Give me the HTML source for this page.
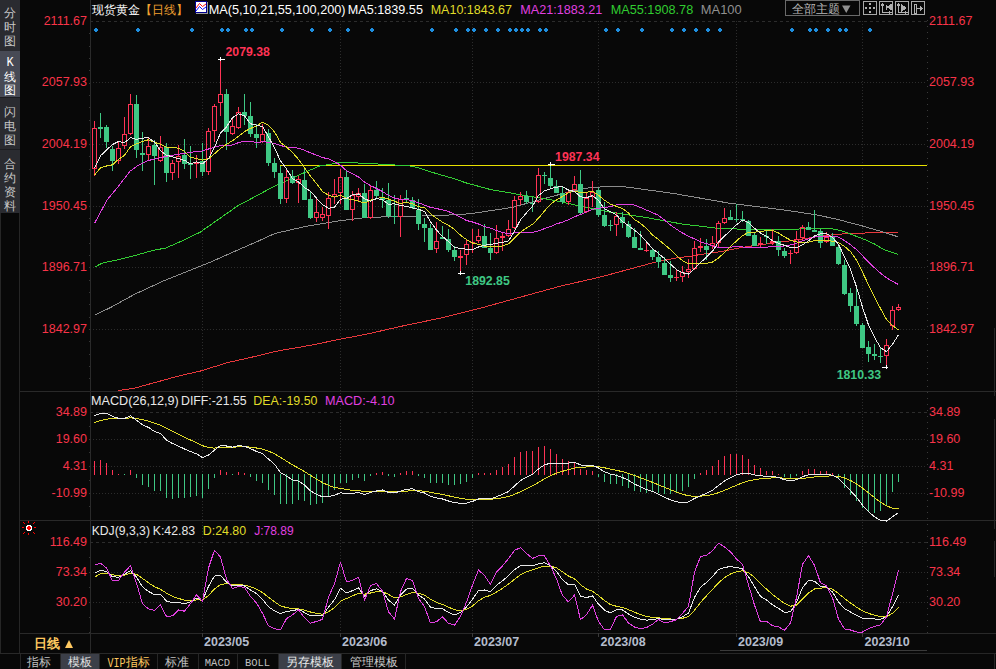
<!DOCTYPE html>
<html><head><meta charset="utf-8"><title>现货黄金 日线</title>
<style>html,body{margin:0;padding:0;background:#080808;width:996px;height:669px;overflow:hidden;font-family:"Liberation Sans",sans-serif}
svg{display:block}
polyline{shape-rendering:crispEdges} circle{shape-rendering:geometricPrecision}
text{shape-rendering:geometricPrecision}
</style></head><body>
<svg width="996" height="669" viewBox="0 0 996 669" shape-rendering="crispEdges"><rect x="0" y="0" width="996" height="669" fill="#080808"/>
<rect x="0" y="0" width="20" height="213" fill="#2a2b30"/>
<rect x="0" y="51" width="20" height="46" fill="#474a55"/>
<rect x="0" y="97" width="20" height="1" fill="#1c1d21"/>
<rect x="0" y="149" width="20" height="1" fill="#1c1d21"/>
<rect x="0" y="213" width="1" height="440" fill="#262626"/>
<rect x="19" y="213" width="1" height="440" fill="#262626"/>
<text x="9.8" y="16.5" fill="#c8c8c8" font-size="12" text-anchor="middle" font-family='"Liberation Sans", sans-serif'>分</text>
<text x="9.8" y="30.5" fill="#c8c8c8" font-size="12" text-anchor="middle" font-family='"Liberation Sans", sans-serif'>时</text>
<text x="9.8" y="45.0" fill="#c8c8c8" font-size="12" text-anchor="middle" font-family='"Liberation Sans", sans-serif'>图</text>
<text x="10" y="66" fill="#ffffff" font-size="12" text-anchor="middle" font-family='"Liberation Mono", monospace'>K</text>
<text x="9.8" y="80.5" fill="#ffffff" font-size="12" text-anchor="middle" font-family='"Liberation Sans", sans-serif'>线</text>
<text x="9.8" y="94.0" fill="#ffffff" font-size="12" text-anchor="middle" font-family='"Liberation Sans", sans-serif'>图</text>
<text x="9.8" y="115.5" fill="#c8c8c8" font-size="12" text-anchor="middle" font-family='"Liberation Sans", sans-serif'>闪</text>
<text x="9.8" y="129.5" fill="#c8c8c8" font-size="12" text-anchor="middle" font-family='"Liberation Sans", sans-serif'>电</text>
<text x="9.8" y="144.0" fill="#c8c8c8" font-size="12" text-anchor="middle" font-family='"Liberation Sans", sans-serif'>图</text>
<text x="9.8" y="168.0" fill="#c8c8c8" font-size="12" text-anchor="middle" font-family='"Liberation Sans", sans-serif'>合</text>
<text x="9.8" y="182.0" fill="#c8c8c8" font-size="12" text-anchor="middle" font-family='"Liberation Sans", sans-serif'>约</text>
<text x="9.8" y="196.0" fill="#c8c8c8" font-size="12" text-anchor="middle" font-family='"Liberation Sans", sans-serif'>资</text>
<text x="9.8" y="210.0" fill="#c8c8c8" font-size="12" text-anchor="middle" font-family='"Liberation Sans", sans-serif'>料</text>
<rect x="20" y="391" width="976" height="1" fill="#292929"/>
<rect x="20" y="520" width="976" height="1" fill="#292929"/>
<rect x="20" y="633" width="976" height="1" fill="#292929"/>
<rect x="90" y="0" width="1" height="653" fill="#2a2a2a"/>
<line x1="927.5" y1="20" x2="927.5" y2="633" stroke="#3a3a3a" stroke-width="1" stroke-dasharray="1,5"/>
<rect x="89" y="33" width="1" height="1" fill="#353535"/>
<rect x="89" y="46" width="1" height="1" fill="#353535"/>
<rect x="89" y="58" width="1" height="1" fill="#353535"/>
<rect x="89" y="70" width="1" height="1" fill="#353535"/>
<rect x="89" y="83" width="1" height="1" fill="#353535"/>
<rect x="89" y="95" width="1" height="1" fill="#353535"/>
<rect x="89" y="107" width="1" height="1" fill="#353535"/>
<rect x="89" y="120" width="1" height="1" fill="#353535"/>
<rect x="89" y="132" width="1" height="1" fill="#353535"/>
<rect x="89" y="144" width="1" height="1" fill="#353535"/>
<rect x="89" y="156" width="1" height="1" fill="#353535"/>
<rect x="89" y="169" width="1" height="1" fill="#353535"/>
<rect x="89" y="181" width="1" height="1" fill="#353535"/>
<rect x="89" y="193" width="1" height="1" fill="#353535"/>
<rect x="89" y="206" width="1" height="1" fill="#353535"/>
<rect x="89" y="218" width="1" height="1" fill="#353535"/>
<rect x="89" y="230" width="1" height="1" fill="#353535"/>
<rect x="89" y="243" width="1" height="1" fill="#353535"/>
<rect x="89" y="255" width="1" height="1" fill="#353535"/>
<rect x="89" y="267" width="1" height="1" fill="#353535"/>
<rect x="89" y="280" width="1" height="1" fill="#353535"/>
<rect x="89" y="292" width="1" height="1" fill="#353535"/>
<rect x="89" y="304" width="1" height="1" fill="#353535"/>
<rect x="89" y="317" width="1" height="1" fill="#353535"/>
<rect x="89" y="329" width="1" height="1" fill="#353535"/>
<rect x="89" y="341" width="1" height="1" fill="#353535"/>
<rect x="89" y="354" width="1" height="1" fill="#353535"/>
<rect x="89" y="366" width="1" height="1" fill="#353535"/>
<rect x="89" y="378" width="1" height="1" fill="#353535"/>
<rect x="89" y="426" width="1" height="1" fill="#353535"/>
<rect x="89" y="439" width="1" height="1" fill="#353535"/>
<rect x="89" y="452" width="1" height="1" fill="#353535"/>
<rect x="89" y="466" width="1" height="1" fill="#353535"/>
<rect x="89" y="480" width="1" height="1" fill="#353535"/>
<rect x="89" y="493" width="1" height="1" fill="#353535"/>
<rect x="89" y="506" width="1" height="1" fill="#353535"/>
<rect x="89" y="557" width="1" height="1" fill="#353535"/>
<rect x="89" y="572" width="1" height="1" fill="#353535"/>
<rect x="89" y="587" width="1" height="1" fill="#353535"/>
<rect x="89" y="602" width="1" height="1" fill="#353535"/>
<rect x="89" y="617" width="1" height="1" fill="#353535"/>
<rect x="89" y="632" width="1" height="1" fill="#353535"/>
<line x1="90" y1="21.5" x2="927" y2="21.5" stroke="#2c2c2c" stroke-width="1" stroke-dasharray="3,3"/>
<text x="87" y="24.6" fill="#f83448" font-size="12.5" text-anchor="end" font-family='"Liberation Sans", sans-serif'>2111.67</text>
<text x="929" y="24.6" fill="#f83448" font-size="12.5" font-family='"Liberation Sans", sans-serif'>2111.67</text>
<line x1="90" y1="82.5" x2="927" y2="82.5" stroke="#2c2c2c" stroke-width="1" stroke-dasharray="1,2"/>
<text x="87" y="86.1" fill="#f83448" font-size="12.5" text-anchor="end" font-family='"Liberation Sans", sans-serif'>2057.93</text>
<text x="929" y="86.1" fill="#f83448" font-size="12.5" font-family='"Liberation Sans", sans-serif'>2057.93</text>
<line x1="90" y1="144.5" x2="927" y2="144.5" stroke="#2c2c2c" stroke-width="1" stroke-dasharray="1,2"/>
<text x="87" y="147.6" fill="#f83448" font-size="12.5" text-anchor="end" font-family='"Liberation Sans", sans-serif'>2004.19</text>
<text x="929" y="147.6" fill="#f83448" font-size="12.5" font-family='"Liberation Sans", sans-serif'>2004.19</text>
<line x1="90" y1="206.5" x2="927" y2="206.5" stroke="#2c2c2c" stroke-width="1" stroke-dasharray="1,2"/>
<text x="87" y="209.6" fill="#f83448" font-size="12.5" text-anchor="end" font-family='"Liberation Sans", sans-serif'>1950.45</text>
<text x="929" y="209.6" fill="#f83448" font-size="12.5" font-family='"Liberation Sans", sans-serif'>1950.45</text>
<line x1="90" y1="267.5" x2="927" y2="267.5" stroke="#2c2c2c" stroke-width="1" stroke-dasharray="1,2"/>
<text x="87" y="270.6" fill="#f83448" font-size="12.5" text-anchor="end" font-family='"Liberation Sans", sans-serif'>1896.71</text>
<text x="929" y="270.6" fill="#f83448" font-size="12.5" font-family='"Liberation Sans", sans-serif'>1896.71</text>
<line x1="90" y1="329.5" x2="927" y2="329.5" stroke="#2c2c2c" stroke-width="1" stroke-dasharray="1,2"/>
<text x="87" y="332.6" fill="#f83448" font-size="12.5" text-anchor="end" font-family='"Liberation Sans", sans-serif'>1842.97</text>
<text x="929" y="332.6" fill="#f83448" font-size="12.5" font-family='"Liberation Sans", sans-serif'>1842.97</text>
<line x1="90" y1="412.5" x2="927" y2="412.5" stroke="#2c2c2c" stroke-width="1" stroke-dasharray="3,3"/>
<text x="87" y="415.6" fill="#f83448" font-size="12.5" text-anchor="end" font-family='"Liberation Sans", sans-serif'>34.89</text>
<text x="929" y="415.6" fill="#f83448" font-size="12.5" font-family='"Liberation Sans", sans-serif'>34.89</text>
<line x1="90" y1="439.5" x2="927" y2="439.5" stroke="#2c2c2c" stroke-width="1" stroke-dasharray="1,2"/>
<text x="87" y="442.6" fill="#f83448" font-size="12.5" text-anchor="end" font-family='"Liberation Sans", sans-serif'>19.60</text>
<text x="929" y="442.6" fill="#f83448" font-size="12.5" font-family='"Liberation Sans", sans-serif'>19.60</text>
<line x1="90" y1="466.5" x2="927" y2="466.5" stroke="#2c2c2c" stroke-width="1" stroke-dasharray="1,2"/>
<text x="87" y="469.6" fill="#f83448" font-size="12.5" text-anchor="end" font-family='"Liberation Sans", sans-serif'>4.31</text>
<text x="929" y="469.6" fill="#f83448" font-size="12.5" font-family='"Liberation Sans", sans-serif'>4.31</text>
<line x1="90" y1="493.5" x2="927" y2="493.5" stroke="#2c2c2c" stroke-width="1" stroke-dasharray="1,2"/>
<text x="87" y="496.6" fill="#f83448" font-size="12.5" text-anchor="end" font-family='"Liberation Sans", sans-serif'>-10.99</text>
<text x="929" y="496.6" fill="#f83448" font-size="12.5" font-family='"Liberation Sans", sans-serif'>-10.99</text>
<line x1="90" y1="542.5" x2="927" y2="542.5" stroke="#2c2c2c" stroke-width="1" stroke-dasharray="3,3"/>
<text x="87" y="545.6" fill="#f83448" font-size="12.5" text-anchor="end" font-family='"Liberation Sans", sans-serif'>116.49</text>
<text x="929" y="545.6" fill="#f83448" font-size="12.5" font-family='"Liberation Sans", sans-serif'>116.49</text>
<line x1="90" y1="572.5" x2="927" y2="572.5" stroke="#2c2c2c" stroke-width="1" stroke-dasharray="1,2"/>
<text x="87" y="575.6" fill="#f83448" font-size="12.5" text-anchor="end" font-family='"Liberation Sans", sans-serif'>73.34</text>
<text x="929" y="575.6" fill="#f83448" font-size="12.5" font-family='"Liberation Sans", sans-serif'>73.34</text>
<line x1="90" y1="602.5" x2="927" y2="602.5" stroke="#2c2c2c" stroke-width="1" stroke-dasharray="1,2"/>
<text x="87" y="605.6" fill="#f83448" font-size="12.5" text-anchor="end" font-family='"Liberation Sans", sans-serif'>30.20</text>
<text x="929" y="605.6" fill="#f83448" font-size="12.5" font-family='"Liberation Sans", sans-serif'>30.20</text>
<line x1="202.5" y1="21" x2="202.5" y2="633" stroke="#2c2c2c" stroke-width="1" stroke-dasharray="1,2"/>
<rect x="202" y="633" width="1" height="4" fill="#3a3a3a"/>
<line x1="340.5" y1="21" x2="340.5" y2="633" stroke="#2c2c2c" stroke-width="1" stroke-dasharray="1,2"/>
<rect x="340" y="633" width="1" height="4" fill="#3a3a3a"/>
<line x1="472.5" y1="21" x2="472.5" y2="633" stroke="#2c2c2c" stroke-width="1" stroke-dasharray="1,2"/>
<rect x="472" y="633" width="1" height="4" fill="#3a3a3a"/>
<line x1="598.5" y1="21" x2="598.5" y2="633" stroke="#2c2c2c" stroke-width="1" stroke-dasharray="1,2"/>
<rect x="598" y="633" width="1" height="4" fill="#3a3a3a"/>
<line x1="736.5" y1="21" x2="736.5" y2="633" stroke="#2c2c2c" stroke-width="1" stroke-dasharray="1,2"/>
<rect x="736" y="633" width="1" height="4" fill="#3a3a3a"/>
<line x1="862.5" y1="21" x2="862.5" y2="633" stroke="#2c2c2c" stroke-width="1" stroke-dasharray="1,2"/>
<rect x="862" y="633" width="1" height="4" fill="#3a3a3a"/>
<rect x="280" y="165" width="647" height="1" fill="#e8e000"/>
<polyline points="118.1,390.5 134.3,388.2 180.6,375.5 201.5,370.8 227.0,362.7 258.0,355.8 274.8,351.5 312.2,345.0 339.6,339.3 367.4,334.0 404.7,325.5 440.2,318.2 480.3,308.2 520.5,297.1 560.6,286.1 600.0,277.1 640.0,266.3 656.0,261.9 678.6,257.5 691.4,256.3 700.0,254.5 721.1,251.6 742.2,247.4 756.3,245.3 777.4,242.5 798.5,239.7 819.5,236.2 840.0,234.1 867.0,232.9 897.6,232.6" fill="none" stroke="#e8383c" stroke-width="1" stroke-linejoin="round"/>
<polyline points="94.5,315.3 111.2,307.2 134.3,294.4 164.4,280.5 187.6,271.3 210.7,262.0 231.6,252.7 258.0,241.2 274.8,233.5 304.7,226.6 338.0,221.0 367.4,217.3 404.7,216.5 442.1,215.4 470.0,213.8 512.2,207.4 540.3,199.7 568.5,192.0 589.5,187.7 610.0,186.3 624.7,186.8 672.5,193.3 728.7,203.1 785.0,210.1 816.2,214.8 838.0,219.5 862.5,226.0 883.2,232.0 897.7,236.7" fill="none" stroke="#8c8c8c" stroke-width="1" stroke-linejoin="round"/>
<polyline points="94.5,267.3 101.9,263.2 118.1,259.7 134.3,255.7 152.8,250.4 165.6,248.1 184.1,240.0 200.1,232.2 237.5,206.0 270.0,188.6 279.7,183.8 289.4,179.4 299.1,175.0 308.8,170.7 320.0,165.8 330.0,164.5 339.6,162.5 355.7,162.9 379.8,164.1 391.8,164.8 410.3,166.0 416.7,167.3 432.8,172.5 452.1,178.1 466.5,183.0 490.0,189.4 516.8,194.1 554.2,200.4 580.0,206.0 607.4,211.7 644.7,217.3 682.1,224.0 719.5,228.5 756.8,229.6 794.2,229.2 816.2,228.3 830.0,228.5 839.9,230.4 847.0,232.6 856.0,236.2 865.2,239.8 874.2,243.9 883.2,249.3 897.7,254.3" fill="none" stroke="#33cc33" stroke-width="1" stroke-linejoin="round"/>
<rect x="92.5" y="128.5" width="4" height="40" fill="none" stroke="#ff3355"/>
<rect x="94" y="121" width="1" height="7" fill="#ff3355"/>
<rect x="94" y="169" width="1" height="7" fill="#ff3355"/>
<rect x="98" y="127" width="5" height="2" fill="#3fc884"/>
<rect x="100" y="113" width="1" height="25" fill="#3fc884"/>
<rect x="104" y="127" width="5" height="15" fill="#3fc884"/>
<rect x="106" y="125" width="1" height="23" fill="#3fc884"/>
<rect x="110" y="149" width="5" height="12" fill="#3fc884"/>
<rect x="112" y="146" width="1" height="25" fill="#3fc884"/>
<rect x="116.5" y="148.5" width="4" height="12" fill="none" stroke="#ff3355"/>
<rect x="118" y="141" width="1" height="7" fill="#ff3355"/>
<rect x="118" y="161" width="1" height="3" fill="#ff3355"/>
<rect x="122.5" y="134.5" width="4" height="11" fill="none" stroke="#ff3355"/>
<rect x="124" y="117" width="1" height="17" fill="#ff3355"/>
<rect x="124" y="146" width="1" height="3" fill="#ff3355"/>
<rect x="128.5" y="104.5" width="4" height="29" fill="none" stroke="#ff3355"/>
<rect x="130" y="94" width="1" height="10" fill="#ff3355"/>
<rect x="130" y="134" width="1" height="1" fill="#ff3355"/>
<rect x="134" y="104" width="5" height="46" fill="#3fc884"/>
<rect x="136" y="95" width="1" height="63" fill="#3fc884"/>
<rect x="140" y="153" width="5" height="2" fill="#3fc884"/>
<rect x="142" y="132" width="1" height="39" fill="#3fc884"/>
<rect x="146.5" y="146.5" width="4" height="8" fill="none" stroke="#ff3355"/>
<rect x="148" y="137" width="1" height="9" fill="#ff3355"/>
<rect x="148" y="155" width="1" height="6" fill="#ff3355"/>
<rect x="152" y="145" width="5" height="11" fill="#3fc884"/>
<rect x="154" y="140" width="1" height="45" fill="#3fc884"/>
<rect x="158.5" y="147.5" width="4" height="13" fill="none" stroke="#ff3355"/>
<rect x="160" y="136" width="1" height="11" fill="#ff3355"/>
<rect x="160" y="161" width="1" height="1" fill="#ff3355"/>
<rect x="164" y="147" width="5" height="26" fill="#3fc884"/>
<rect x="166" y="143" width="1" height="39" fill="#3fc884"/>
<rect x="170.5" y="163.5" width="4" height="9" fill="none" stroke="#ff3355"/>
<rect x="172" y="160" width="1" height="3" fill="#ff3355"/>
<rect x="172" y="173" width="1" height="7" fill="#ff3355"/>
<rect x="176.5" y="156.5" width="4" height="5" fill="none" stroke="#ff3355"/>
<rect x="178" y="145" width="1" height="11" fill="#ff3355"/>
<rect x="178" y="162" width="1" height="16" fill="#ff3355"/>
<rect x="182" y="155" width="5" height="9" fill="#3fc884"/>
<rect x="184" y="139" width="1" height="30" fill="#3fc884"/>
<rect x="188" y="163" width="5" height="2" fill="#3fc884"/>
<rect x="190" y="146" width="1" height="33" fill="#3fc884"/>
<rect x="194.5" y="162.5" width="4" height="1" fill="none" stroke="#ff3355"/>
<rect x="196" y="155" width="1" height="7" fill="#ff3355"/>
<rect x="196" y="164" width="1" height="14" fill="#ff3355"/>
<rect x="200" y="161" width="5" height="11" fill="#3fc884"/>
<rect x="202" y="143" width="1" height="33" fill="#3fc884"/>
<rect x="206.5" y="131.5" width="4" height="40" fill="none" stroke="#ff3355"/>
<rect x="208" y="128" width="1" height="3" fill="#ff3355"/>
<rect x="208" y="172" width="1" height="3" fill="#ff3355"/>
<rect x="212.5" y="106.5" width="4" height="24" fill="none" stroke="#ff3355"/>
<rect x="214" y="104" width="1" height="2" fill="#ff3355"/>
<rect x="214" y="131" width="1" height="11" fill="#ff3355"/>
<rect x="218.5" y="94.5" width="4" height="8" fill="none" stroke="#ff3355"/>
<rect x="220" y="59" width="1" height="35" fill="#ff3355"/>
<rect x="220" y="103" width="1" height="13" fill="#ff3355"/>
<rect x="224" y="94" width="5" height="38" fill="#3fc884"/>
<rect x="226" y="89" width="1" height="61" fill="#3fc884"/>
<rect x="230.5" y="126.5" width="4" height="7" fill="none" stroke="#ff3355"/>
<rect x="232" y="118" width="1" height="8" fill="#ff3355"/>
<rect x="232" y="134" width="1" height="1" fill="#ff3355"/>
<rect x="236.5" y="112.5" width="4" height="15" fill="none" stroke="#ff3355"/>
<rect x="238" y="107" width="1" height="5" fill="#ff3355"/>
<rect x="238" y="128" width="1" height="1" fill="#ff3355"/>
<rect x="242" y="112" width="5" height="4" fill="#3fc884"/>
<rect x="244" y="94" width="1" height="31" fill="#3fc884"/>
<rect x="248" y="116" width="5" height="18" fill="#3fc884"/>
<rect x="250" y="102" width="1" height="35" fill="#3fc884"/>
<rect x="254" y="134" width="5" height="4" fill="#3fc884"/>
<rect x="256" y="124" width="1" height="24" fill="#3fc884"/>
<rect x="260.5" y="134.5" width="4" height="7" fill="none" stroke="#ff3355"/>
<rect x="262" y="124" width="1" height="10" fill="#ff3355"/>
<rect x="262" y="142" width="1" height="1" fill="#ff3355"/>
<rect x="266" y="133" width="5" height="30" fill="#3fc884"/>
<rect x="268" y="129" width="1" height="37" fill="#3fc884"/>
<rect x="272" y="163" width="5" height="9" fill="#3fc884"/>
<rect x="274" y="158" width="1" height="20" fill="#3fc884"/>
<rect x="278" y="173" width="5" height="26" fill="#3fc884"/>
<rect x="280" y="166" width="1" height="38" fill="#3fc884"/>
<rect x="284.5" y="177.5" width="4" height="21" fill="none" stroke="#ff3355"/>
<rect x="286" y="169" width="1" height="8" fill="#ff3355"/>
<rect x="286" y="199" width="1" height="4" fill="#ff3355"/>
<rect x="290" y="176" width="5" height="7" fill="#3fc884"/>
<rect x="292" y="170" width="1" height="14" fill="#3fc884"/>
<rect x="296.5" y="179.5" width="4" height="3" fill="none" stroke="#ff3355"/>
<rect x="298" y="176" width="1" height="3" fill="#ff3355"/>
<rect x="298" y="183" width="1" height="20" fill="#ff3355"/>
<rect x="302" y="180" width="5" height="20" fill="#3fc884"/>
<rect x="304" y="167" width="1" height="33" fill="#3fc884"/>
<rect x="308" y="199" width="5" height="19" fill="#3fc884"/>
<rect x="310" y="192" width="1" height="27" fill="#3fc884"/>
<rect x="314.5" y="212.5" width="4" height="5" fill="none" stroke="#ff3355"/>
<rect x="316" y="199" width="1" height="13" fill="#ff3355"/>
<rect x="316" y="218" width="1" height="4" fill="#ff3355"/>
<rect x="320.5" y="214.5" width="4" height="3" fill="none" stroke="#ff3355"/>
<rect x="322" y="207" width="1" height="7" fill="#ff3355"/>
<rect x="322" y="218" width="1" height="3" fill="#ff3355"/>
<rect x="326.5" y="198.5" width="4" height="17" fill="none" stroke="#ff3355"/>
<rect x="328" y="192" width="1" height="6" fill="#ff3355"/>
<rect x="328" y="216" width="1" height="13" fill="#ff3355"/>
<rect x="332.5" y="194.5" width="4" height="2" fill="none" stroke="#ff3355"/>
<rect x="334" y="179" width="1" height="15" fill="#ff3355"/>
<rect x="334" y="197" width="1" height="7" fill="#ff3355"/>
<rect x="338.5" y="177.5" width="4" height="15" fill="none" stroke="#ff3355"/>
<rect x="340" y="169" width="1" height="8" fill="#ff3355"/>
<rect x="340" y="193" width="1" height="11" fill="#ff3355"/>
<rect x="344" y="177" width="5" height="33" fill="#3fc884"/>
<rect x="346" y="171" width="1" height="39" fill="#3fc884"/>
<rect x="350.5" y="195.5" width="4" height="14" fill="none" stroke="#ff3355"/>
<rect x="352" y="191" width="1" height="4" fill="#ff3355"/>
<rect x="352" y="210" width="1" height="11" fill="#ff3355"/>
<rect x="356.5" y="193.5" width="4" height="3" fill="none" stroke="#ff3355"/>
<rect x="358" y="188" width="1" height="5" fill="#ff3355"/>
<rect x="358" y="197" width="1" height="5" fill="#ff3355"/>
<rect x="362" y="193" width="5" height="25" fill="#3fc884"/>
<rect x="364" y="184" width="1" height="34" fill="#3fc884"/>
<rect x="368.5" y="190.5" width="4" height="27" fill="none" stroke="#ff3355"/>
<rect x="370" y="186" width="1" height="4" fill="#ff3355"/>
<rect x="370" y="218" width="1" height="1" fill="#ff3355"/>
<rect x="374" y="190" width="5" height="6" fill="#3fc884"/>
<rect x="376" y="181" width="1" height="17" fill="#3fc884"/>
<rect x="380" y="197" width="5" height="3" fill="#3fc884"/>
<rect x="382" y="188" width="1" height="20" fill="#3fc884"/>
<rect x="386" y="200" width="5" height="16" fill="#3fc884"/>
<rect x="388" y="183" width="1" height="35" fill="#3fc884"/>
<rect x="392" y="216" width="5" height="1" fill="#3fc884"/>
<rect x="394" y="195" width="1" height="29" fill="#3fc884"/>
<rect x="398.5" y="199.5" width="4" height="17" fill="none" stroke="#ff3355"/>
<rect x="400" y="195" width="1" height="4" fill="#ff3355"/>
<rect x="400" y="217" width="1" height="20" fill="#ff3355"/>
<rect x="404" y="198" width="5" height="2" fill="#3fc884"/>
<rect x="406" y="190" width="1" height="12" fill="#3fc884"/>
<rect x="410" y="200" width="5" height="8" fill="#3fc884"/>
<rect x="412" y="197" width="1" height="12" fill="#3fc884"/>
<rect x="416" y="210" width="5" height="14" fill="#3fc884"/>
<rect x="418" y="199" width="1" height="31" fill="#3fc884"/>
<rect x="422" y="224" width="5" height="4" fill="#3fc884"/>
<rect x="424" y="218" width="1" height="24" fill="#3fc884"/>
<rect x="428" y="228" width="5" height="22" fill="#3fc884"/>
<rect x="430" y="224" width="1" height="26" fill="#3fc884"/>
<rect x="434.5" y="241.5" width="4" height="7" fill="none" stroke="#ff3355"/>
<rect x="436" y="222" width="1" height="19" fill="#ff3355"/>
<rect x="436" y="249" width="1" height="4" fill="#ff3355"/>
<rect x="440" y="237" width="5" height="2" fill="#3fc884"/>
<rect x="442" y="226" width="1" height="13" fill="#3fc884"/>
<rect x="446" y="239" width="5" height="11" fill="#3fc884"/>
<rect x="448" y="229" width="1" height="23" fill="#3fc884"/>
<rect x="452" y="250" width="5" height="7" fill="#3fc884"/>
<rect x="454" y="246" width="1" height="15" fill="#3fc884"/>
<rect x="458.5" y="256.5" width="4" height="1" fill="none" stroke="#ff3355"/>
<rect x="460" y="250" width="1" height="6" fill="#ff3355"/>
<rect x="460" y="258" width="1" height="16" fill="#ff3355"/>
<rect x="464.5" y="244.5" width="4" height="10" fill="none" stroke="#ff3355"/>
<rect x="466" y="240" width="1" height="4" fill="#ff3355"/>
<rect x="466" y="255" width="1" height="10" fill="#ff3355"/>
<rect x="470.5" y="242.5" width="4" height="0" fill="none" stroke="#ff3355"/>
<rect x="470" y="242" width="5" height="1" fill="#ff3355"/>
<rect x="472" y="229" width="1" height="13" fill="#ff3355"/>
<rect x="472" y="243" width="1" height="10" fill="#ff3355"/>
<rect x="476.5" y="236.5" width="4" height="4" fill="none" stroke="#ff3355"/>
<rect x="478" y="229" width="1" height="7" fill="#ff3355"/>
<rect x="478" y="241" width="1" height="2" fill="#ff3355"/>
<rect x="482" y="236" width="5" height="12" fill="#3fc884"/>
<rect x="484" y="224" width="1" height="24" fill="#3fc884"/>
<rect x="488" y="248" width="5" height="5" fill="#3fc884"/>
<rect x="490" y="233" width="1" height="27" fill="#3fc884"/>
<rect x="494.5" y="238.5" width="4" height="14" fill="none" stroke="#ff3355"/>
<rect x="496" y="225" width="1" height="13" fill="#ff3355"/>
<rect x="496" y="253" width="1" height="1" fill="#ff3355"/>
<rect x="500.5" y="236.5" width="4" height="1" fill="none" stroke="#ff3355"/>
<rect x="502" y="232" width="1" height="4" fill="#ff3355"/>
<rect x="502" y="238" width="1" height="13" fill="#ff3355"/>
<rect x="506.5" y="229.5" width="4" height="6" fill="none" stroke="#ff3355"/>
<rect x="508" y="220" width="1" height="9" fill="#ff3355"/>
<rect x="508" y="236" width="1" height="1" fill="#ff3355"/>
<rect x="512.5" y="200.5" width="4" height="27" fill="none" stroke="#ff3355"/>
<rect x="514" y="196" width="1" height="4" fill="#ff3355"/>
<rect x="514" y="228" width="1" height="1" fill="#ff3355"/>
<rect x="518.5" y="196.5" width="4" height="3" fill="none" stroke="#ff3355"/>
<rect x="520" y="192" width="1" height="4" fill="#ff3355"/>
<rect x="520" y="200" width="1" height="5" fill="#ff3355"/>
<rect x="524" y="196" width="5" height="6" fill="#3fc884"/>
<rect x="526" y="191" width="1" height="13" fill="#3fc884"/>
<rect x="530" y="203" width="5" height="1" fill="#3fc884"/>
<rect x="532" y="197" width="1" height="15" fill="#3fc884"/>
<rect x="536.5" y="175.5" width="4" height="26" fill="none" stroke="#ff3355"/>
<rect x="538" y="168" width="1" height="7" fill="#ff3355"/>
<rect x="538" y="202" width="1" height="1" fill="#ff3355"/>
<rect x="542" y="175" width="5" height="1" fill="#3fc884"/>
<rect x="544" y="172" width="1" height="12" fill="#3fc884"/>
<rect x="548" y="178" width="5" height="8" fill="#3fc884"/>
<rect x="550" y="163" width="1" height="25" fill="#3fc884"/>
<rect x="554" y="186" width="5" height="7" fill="#3fc884"/>
<rect x="556" y="180" width="1" height="13" fill="#3fc884"/>
<rect x="560" y="193" width="5" height="9" fill="#3fc884"/>
<rect x="562" y="187" width="1" height="17" fill="#3fc884"/>
<rect x="566.5" y="192.5" width="4" height="9" fill="none" stroke="#ff3355"/>
<rect x="568" y="191" width="1" height="1" fill="#ff3355"/>
<rect x="568" y="202" width="1" height="3" fill="#ff3355"/>
<rect x="572.5" y="184.5" width="4" height="5" fill="none" stroke="#ff3355"/>
<rect x="574" y="176" width="1" height="8" fill="#ff3355"/>
<rect x="574" y="190" width="1" height="1" fill="#ff3355"/>
<rect x="578" y="184" width="5" height="29" fill="#3fc884"/>
<rect x="580" y="170" width="1" height="45" fill="#3fc884"/>
<rect x="584.5" y="198.5" width="4" height="13" fill="none" stroke="#ff3355"/>
<rect x="586" y="192" width="1" height="6" fill="#ff3355"/>
<rect x="586" y="212" width="1" height="1" fill="#ff3355"/>
<rect x="590.5" y="192.5" width="4" height="4" fill="none" stroke="#ff3355"/>
<rect x="592" y="181" width="1" height="11" fill="#ff3355"/>
<rect x="592" y="197" width="1" height="10" fill="#ff3355"/>
<rect x="596" y="190" width="5" height="25" fill="#3fc884"/>
<rect x="598" y="188" width="1" height="29" fill="#3fc884"/>
<rect x="602" y="215" width="5" height="11" fill="#3fc884"/>
<rect x="604" y="202" width="1" height="25" fill="#3fc884"/>
<rect x="608" y="225" width="5" height="1" fill="#3fc884"/>
<rect x="610" y="220" width="1" height="11" fill="#3fc884"/>
<rect x="614.5" y="216.5" width="4" height="8" fill="none" stroke="#ff3355"/>
<rect x="616" y="212" width="1" height="4" fill="#ff3355"/>
<rect x="616" y="225" width="1" height="11" fill="#ff3355"/>
<rect x="620" y="217" width="5" height="6" fill="#3fc884"/>
<rect x="622" y="212" width="1" height="16" fill="#3fc884"/>
<rect x="626" y="224" width="5" height="13" fill="#3fc884"/>
<rect x="628" y="221" width="1" height="17" fill="#3fc884"/>
<rect x="632" y="237" width="5" height="11" fill="#3fc884"/>
<rect x="634" y="228" width="1" height="20" fill="#3fc884"/>
<rect x="638" y="248" width="5" height="2" fill="#3fc884"/>
<rect x="640" y="231" width="1" height="19" fill="#3fc884"/>
<rect x="644.5" y="250.5" width="4" height="0" fill="none" stroke="#ff3355"/>
<rect x="644" y="250" width="5" height="1" fill="#ff3355"/>
<rect x="646" y="242" width="1" height="8" fill="#ff3355"/>
<rect x="646" y="251" width="1" height="1" fill="#ff3355"/>
<rect x="650" y="250" width="5" height="7" fill="#3fc884"/>
<rect x="652" y="248" width="1" height="12" fill="#3fc884"/>
<rect x="656" y="257" width="5" height="5" fill="#3fc884"/>
<rect x="658" y="251" width="1" height="17" fill="#3fc884"/>
<rect x="662" y="263" width="5" height="12" fill="#3fc884"/>
<rect x="664" y="257" width="1" height="18" fill="#3fc884"/>
<rect x="668" y="275" width="5" height="3" fill="#3fc884"/>
<rect x="670" y="261" width="1" height="21" fill="#3fc884"/>
<rect x="674.5" y="277.5" width="4" height="0" fill="none" stroke="#ff3355"/>
<rect x="674" y="277" width="5" height="1" fill="#ff3355"/>
<rect x="676" y="270" width="1" height="7" fill="#ff3355"/>
<rect x="676" y="278" width="1" height="3" fill="#ff3355"/>
<rect x="680.5" y="272.5" width="4" height="4" fill="none" stroke="#ff3355"/>
<rect x="682" y="266" width="1" height="6" fill="#ff3355"/>
<rect x="682" y="277" width="1" height="5" fill="#ff3355"/>
<rect x="686.5" y="269.5" width="4" height="2" fill="none" stroke="#ff3355"/>
<rect x="688" y="259" width="1" height="10" fill="#ff3355"/>
<rect x="688" y="272" width="1" height="6" fill="#ff3355"/>
<rect x="692.5" y="248.5" width="4" height="20" fill="none" stroke="#ff3355"/>
<rect x="694" y="241" width="1" height="7" fill="#ff3355"/>
<rect x="694" y="269" width="1" height="1" fill="#ff3355"/>
<rect x="698.5" y="246.5" width="4" height="1" fill="none" stroke="#ff3355"/>
<rect x="700" y="238" width="1" height="8" fill="#ff3355"/>
<rect x="700" y="248" width="1" height="4" fill="#ff3355"/>
<rect x="704" y="246" width="5" height="4" fill="#3fc884"/>
<rect x="706" y="239" width="1" height="21" fill="#3fc884"/>
<rect x="710.5" y="243.5" width="4" height="2" fill="none" stroke="#ff3355"/>
<rect x="712" y="236" width="1" height="7" fill="#ff3355"/>
<rect x="712" y="246" width="1" height="3" fill="#ff3355"/>
<rect x="716.5" y="223.5" width="4" height="19" fill="none" stroke="#ff3355"/>
<rect x="718" y="221" width="1" height="2" fill="#ff3355"/>
<rect x="718" y="243" width="1" height="5" fill="#ff3355"/>
<rect x="722.5" y="218.5" width="4" height="4" fill="none" stroke="#ff3355"/>
<rect x="724" y="208" width="1" height="10" fill="#ff3355"/>
<rect x="724" y="223" width="1" height="1" fill="#ff3355"/>
<rect x="728" y="217" width="5" height="3" fill="#3fc884"/>
<rect x="730" y="210" width="1" height="10" fill="#3fc884"/>
<rect x="734" y="219" width="5" height="1" fill="#3fc884"/>
<rect x="736" y="204" width="1" height="18" fill="#3fc884"/>
<rect x="740" y="219" width="5" height="1" fill="#3fc884"/>
<rect x="742" y="211" width="1" height="11" fill="#3fc884"/>
<rect x="746" y="221" width="5" height="15" fill="#3fc884"/>
<rect x="748" y="220" width="1" height="16" fill="#3fc884"/>
<rect x="752" y="235" width="5" height="11" fill="#3fc884"/>
<rect x="754" y="232" width="1" height="14" fill="#3fc884"/>
<rect x="758.5" y="243.5" width="4" height="1" fill="none" stroke="#ff3355"/>
<rect x="760" y="237" width="1" height="6" fill="#ff3355"/>
<rect x="760" y="245" width="1" height="2" fill="#ff3355"/>
<rect x="764" y="236" width="5" height="1" fill="#3fc884"/>
<rect x="766" y="230" width="1" height="14" fill="#3fc884"/>
<rect x="770.5" y="241.5" width="4" height="1" fill="none" stroke="#ff3355"/>
<rect x="772" y="229" width="1" height="12" fill="#ff3355"/>
<rect x="772" y="243" width="1" height="2" fill="#ff3355"/>
<rect x="776" y="241" width="5" height="9" fill="#3fc884"/>
<rect x="778" y="236" width="1" height="20" fill="#3fc884"/>
<rect x="782" y="251" width="5" height="5" fill="#3fc884"/>
<rect x="784" y="248" width="1" height="10" fill="#3fc884"/>
<rect x="788.5" y="253.5" width="4" height="0" fill="none" stroke="#ff3355"/>
<rect x="788" y="253" width="5" height="1" fill="#ff3355"/>
<rect x="790" y="250" width="1" height="3" fill="#ff3355"/>
<rect x="790" y="254" width="1" height="10" fill="#ff3355"/>
<rect x="794.5" y="239.5" width="4" height="13" fill="none" stroke="#ff3355"/>
<rect x="796" y="231" width="1" height="8" fill="#ff3355"/>
<rect x="796" y="253" width="1" height="1" fill="#ff3355"/>
<rect x="800.5" y="227.5" width="4" height="10" fill="none" stroke="#ff3355"/>
<rect x="802" y="225" width="1" height="2" fill="#ff3355"/>
<rect x="802" y="238" width="1" height="2" fill="#ff3355"/>
<rect x="806" y="227" width="5" height="3" fill="#3fc884"/>
<rect x="808" y="222" width="1" height="8" fill="#3fc884"/>
<rect x="812" y="230" width="5" height="2" fill="#3fc884"/>
<rect x="814" y="210" width="1" height="22" fill="#3fc884"/>
<rect x="818" y="231" width="5" height="12" fill="#3fc884"/>
<rect x="820" y="229" width="1" height="19" fill="#3fc884"/>
<rect x="824.5" y="237.5" width="4" height="4" fill="none" stroke="#ff3355"/>
<rect x="826" y="232" width="1" height="5" fill="#ff3355"/>
<rect x="826" y="242" width="1" height="1" fill="#ff3355"/>
<rect x="830" y="237" width="5" height="9" fill="#3fc884"/>
<rect x="832" y="233" width="1" height="13" fill="#3fc884"/>
<rect x="836" y="247" width="5" height="17" fill="#3fc884"/>
<rect x="838" y="246" width="1" height="19" fill="#3fc884"/>
<rect x="842" y="265" width="5" height="29" fill="#3fc884"/>
<rect x="844" y="260" width="1" height="35" fill="#3fc884"/>
<rect x="848" y="293" width="5" height="13" fill="#3fc884"/>
<rect x="850" y="288" width="1" height="24" fill="#3fc884"/>
<rect x="854" y="306" width="5" height="18" fill="#3fc884"/>
<rect x="856" y="288" width="1" height="38" fill="#3fc884"/>
<rect x="860" y="325" width="5" height="23" fill="#3fc884"/>
<rect x="862" y="323" width="1" height="25" fill="#3fc884"/>
<rect x="866" y="347" width="5" height="7" fill="#3fc884"/>
<rect x="868" y="341" width="1" height="21" fill="#3fc884"/>
<rect x="872" y="354" width="5" height="2" fill="#3fc884"/>
<rect x="874" y="344" width="1" height="16" fill="#3fc884"/>
<rect x="878" y="356" width="5" height="1" fill="#3fc884"/>
<rect x="880" y="348" width="1" height="15" fill="#3fc884"/>
<rect x="884.5" y="345.5" width="4" height="10" fill="none" stroke="#ff3355"/>
<rect x="886" y="339" width="1" height="6" fill="#ff3355"/>
<rect x="886" y="356" width="1" height="10" fill="#ff3355"/>
<rect x="890.5" y="310.5" width="4" height="15" fill="none" stroke="#ff3355"/>
<rect x="892" y="306" width="1" height="4" fill="#ff3355"/>
<rect x="892" y="326" width="1" height="4" fill="#ff3355"/>
<rect x="896.5" y="307.5" width="4" height="2" fill="none" stroke="#ff3355"/>
<rect x="898" y="304" width="1" height="3" fill="#ff3355"/>
<rect x="898" y="310" width="1" height="1" fill="#ff3355"/>
<polyline points="94.7,223.0 107.1,200.0 117.9,187.0 129.8,171.4 138.2,165.4 148.0,160.6 158.3,158.2 168.0,156.0 179.9,154.0 194.8,151.8 202.3,151.0 214.5,147.1 220.5,145.5 226.5,145.6 232.5,144.9 238.5,142.6 244.5,141.0 250.5,141.0 256.5,142.6 262.5,141.8 268.5,142.2 274.5,143.5 280.5,145.5 286.5,147.0 292.5,147.4 298.5,148.2 304.5,150.3 310.5,152.9 316.5,155.1 322.5,157.6 328.5,158.8 334.5,161.8 340.5,165.2 346.5,170.7 352.5,173.8 358.5,177.0 364.5,182.0 370.5,185.6 376.5,188.5 382.5,191.5 388.5,195.4 394.5,198.0 400.5,199.3 406.5,199.3 412.5,200.8 418.5,202.7 424.5,205.1 430.5,207.4 436.5,208.6 442.5,209.8 448.5,211.5 454.5,214.4 460.5,217.3 466.5,220.5 472.5,222.0 478.5,224.0 484.5,226.6 490.5,228.2 496.5,230.5 502.5,232.4 508.5,233.8 514.5,233.0 520.5,232.0 526.5,232.2 532.5,232.4 538.5,230.9 544.5,228.6 550.5,226.6 556.5,223.9 562.5,222.1 568.5,219.8 574.5,216.7 580.5,214.6 586.5,211.8 592.5,209.3 598.5,208.1 604.5,207.6 610.5,206.6 616.5,204.8 622.5,204.1 628.5,204.2 634.5,205.1 640.5,207.5 646.5,210.1 652.5,212.6 658.5,215.4 664.5,220.1 670.5,225.0 676.5,229.3 682.5,233.0 688.5,236.2 694.5,238.9 700.5,241.9 706.5,243.6 712.5,245.8 718.5,247.3 724.5,247.4 730.5,247.1 736.5,246.8 742.5,247.0 748.5,247.5 754.5,248.0 760.5,247.7 766.5,247.1 772.5,246.7 778.5,246.3 784.5,246.0 790.5,245.0 796.5,243.2 802.5,240.8 808.5,238.7 814.5,237.0 820.5,236.7 826.5,236.2 832.5,236.1 838.5,237.1 844.5,240.5 850.5,244.7 856.5,249.6 862.5,255.7 868.5,262.1 874.5,267.8 880.5,273.1 886.5,277.9 892.5,281.4 898.5,284.5" fill="none" stroke="#e040e0" stroke-width="1" stroke-linejoin="round"/>
<polyline points="94.5,175.0 100.5,167.8 106.5,166.0 112.5,164.8 118.5,159.4 124.5,155.2 130.5,146.9 136.5,143.9 142.5,141.5 148.5,139.7 154.5,142.4 160.5,144.2 166.5,147.2 172.5,147.4 178.5,148.2 184.5,151.2 190.5,157.3 196.5,158.5 202.5,160.2 208.5,158.7 214.5,153.8 220.5,148.5 226.5,144.4 232.5,140.7 238.5,136.4 244.5,131.6 250.5,128.4 256.5,126.0 262.5,122.1 268.5,125.3 274.5,131.9 280.5,142.4 286.5,147.0 292.5,152.6 298.5,159.3 304.5,167.7 310.5,176.1 316.5,183.6 322.5,191.6 328.5,195.1 334.5,197.3 340.5,195.2 346.5,198.4 352.5,199.7 358.5,201.1 364.5,203.0 370.5,200.2 376.5,198.6 382.5,197.2 388.5,199.0 394.5,201.3 400.5,203.4 406.5,202.4 412.5,203.7 418.5,206.7 424.5,207.7 430.5,213.6 436.5,218.2 442.5,222.1 448.5,225.4 454.5,229.4 460.5,235.2 466.5,239.6 472.5,243.0 478.5,244.3 484.5,246.3 490.5,246.6 496.5,246.2 502.5,246.0 508.5,243.9 514.5,238.2 520.5,232.2 526.5,228.0 532.5,224.3 538.5,218.2 544.5,211.0 550.5,204.3 556.5,199.9 562.5,196.5 568.5,192.8 574.5,191.1 580.5,192.8 586.5,192.4 592.5,191.2 598.5,195.2 604.5,200.2 610.5,204.2 616.5,206.4 622.5,208.5 628.5,213.1 634.5,219.6 640.5,223.3 646.5,228.5 652.5,234.9 658.5,239.6 664.5,244.5 670.5,249.7 676.5,255.7 682.5,260.6 688.5,263.8 694.5,263.8 700.5,263.4 706.5,263.4 712.5,262.0 718.5,258.1 724.5,252.4 730.5,246.6 736.5,240.9 742.5,235.7 748.5,232.3 754.5,232.1 760.5,231.8 766.5,230.5 772.5,230.3 778.5,233.0 784.5,236.8 790.5,240.2 796.5,242.0 802.5,242.7 808.5,242.1 814.5,240.7 820.5,240.6 826.5,240.6 832.5,241.2 838.5,242.6 844.5,246.4 850.5,251.6 856.5,260.2 862.5,272.3 868.5,284.7 874.5,297.1 880.5,308.5 886.5,319.3 892.5,325.7 898.5,329.9" fill="none" stroke="#e0dc28" stroke-width="1" stroke-linejoin="round"/>
<polyline points="94.5,168.4 100.5,155.8 106.5,149.9 112.5,144.5 118.5,141.5 124.5,142.7 130.5,137.7 136.5,139.3 142.5,138.1 148.5,137.8 154.5,142.1 160.5,150.6 166.5,155.2 172.5,156.8 178.5,158.7 184.5,160.3 190.5,164.0 196.5,161.9 202.5,163.7 208.5,158.8 214.5,147.3 220.5,133.1 226.5,126.9 232.5,117.7 238.5,113.9 244.5,115.9 250.5,123.8 256.5,125.1 262.5,126.5 268.5,136.7 274.5,147.9 280.5,160.9 286.5,168.9 292.5,178.7 298.5,181.9 304.5,187.5 310.5,191.2 316.5,198.2 322.5,204.6 328.5,208.3 334.5,207.2 340.5,199.2 346.5,198.6 352.5,194.8 358.5,193.9 364.5,198.7 370.5,201.3 376.5,198.6 382.5,199.6 388.5,204.2 394.5,203.9 400.5,205.5 406.5,206.3 412.5,207.8 418.5,209.3 424.5,211.5 430.5,221.7 436.5,230.1 442.5,236.4 448.5,241.6 454.5,247.4 460.5,248.6 466.5,249.2 472.5,249.7 478.5,247.0 484.5,245.2 490.5,244.6 496.5,243.3 502.5,242.3 508.5,240.8 514.5,231.2 520.5,219.8 526.5,212.8 532.5,206.3 538.5,195.5 544.5,190.8 550.5,188.8 556.5,187.1 562.5,186.8 568.5,190.0 574.5,191.5 580.5,196.8 586.5,197.7 592.5,195.7 598.5,200.4 604.5,208.9 610.5,211.5 616.5,215.1 622.5,221.4 628.5,225.8 634.5,230.2 640.5,235.1 646.5,241.8 652.5,248.5 658.5,253.5 664.5,258.7 670.5,264.2 676.5,269.6 682.5,272.8 688.5,274.1 694.5,268.8 700.5,262.5 706.5,257.2 712.5,251.2 718.5,242.1 724.5,236.0 730.5,230.6 736.5,224.7 742.5,220.1 748.5,222.6 754.5,228.3 760.5,233.0 766.5,236.4 772.5,240.6 778.5,243.4 784.5,245.3 790.5,247.4 796.5,247.7 802.5,244.9 808.5,240.8 814.5,236.0 820.5,233.9 826.5,233.5 832.5,237.4 838.5,244.4 844.5,256.8 850.5,269.4 856.5,286.9 862.5,307.1 868.5,325.0 874.5,337.4 880.5,347.6 886.5,351.7 892.5,344.2 898.5,334.8" fill="none" stroke="#e8e8e8" stroke-width="1" stroke-linejoin="round"/>
<rect x="218" y="59" width="7" height="1" fill="#ffffff"/>
<rect x="220" y="57" width="1" height="4" fill="#ffffff"/>
<rect x="548" y="164" width="7" height="1" fill="#ffffff"/>
<rect x="550" y="162" width="1" height="4" fill="#ffffff"/>
<rect x="458" y="273" width="7" height="1" fill="#ffffff"/>
<rect x="460" y="271" width="1" height="4" fill="#ffffff"/>
<rect x="882" y="367" width="6" height="1" fill="#ffffff"/>
<rect x="886" y="365" width="1" height="4" fill="#ffffff"/>
<text x="225.5" y="55.7" fill="#ff3355" font-size="12.3" font-weight="bold" text-anchor="start" font-family='"Liberation Sans", sans-serif'>2079.38</text>
<text x="555.1" y="161.0" fill="#ff3355" font-size="12.3" font-weight="bold" text-anchor="start" font-family='"Liberation Sans", sans-serif'>1987.34</text>
<text x="465.3" y="285.0" fill="#3fc884" font-size="12.3" font-weight="bold" text-anchor="start" font-family='"Liberation Sans", sans-serif'>1892.85</text>
<text x="836.7" y="379.0" fill="#3fc884" font-size="12.3" font-weight="bold" text-anchor="start" font-family='"Liberation Sans", sans-serif'>1810.33</text>
<rect x="94" y="29" width="4" height="2" fill="#1e8fe0"/><rect x="95" y="28" width="2" height="4" fill="#1e8fe0"/>
<rect x="136" y="29" width="4" height="2" fill="#1e8fe0"/><rect x="137" y="28" width="2" height="4" fill="#1e8fe0"/>
<rect x="190" y="29" width="4" height="2" fill="#1e8fe0"/><rect x="191" y="28" width="2" height="4" fill="#1e8fe0"/>
<rect x="220" y="29" width="4" height="2" fill="#1e8fe0"/><rect x="221" y="28" width="2" height="4" fill="#1e8fe0"/>
<rect x="226" y="29" width="4" height="2" fill="#1e8fe0"/><rect x="227" y="28" width="2" height="4" fill="#1e8fe0"/>
<rect x="244" y="29" width="4" height="2" fill="#1e8fe0"/><rect x="245" y="28" width="2" height="4" fill="#1e8fe0"/>
<rect x="250" y="29" width="4" height="2" fill="#1e8fe0"/><rect x="251" y="28" width="2" height="4" fill="#1e8fe0"/>
<rect x="280" y="29" width="4" height="2" fill="#1e8fe0"/><rect x="281" y="28" width="2" height="4" fill="#1e8fe0"/>
<rect x="310" y="29" width="4" height="2" fill="#1e8fe0"/><rect x="311" y="28" width="2" height="4" fill="#1e8fe0"/>
<rect x="328" y="29" width="4" height="2" fill="#1e8fe0"/><rect x="329" y="28" width="2" height="4" fill="#1e8fe0"/>
<rect x="346" y="29" width="4" height="2" fill="#1e8fe0"/><rect x="347" y="28" width="2" height="4" fill="#1e8fe0"/>
<rect x="370" y="29" width="4" height="2" fill="#1e8fe0"/><rect x="371" y="28" width="2" height="4" fill="#1e8fe0"/>
<rect x="430" y="29" width="4" height="2" fill="#1e8fe0"/><rect x="431" y="28" width="2" height="4" fill="#1e8fe0"/>
<rect x="454" y="29" width="4" height="2" fill="#1e8fe0"/><rect x="455" y="28" width="2" height="4" fill="#1e8fe0"/>
<rect x="466" y="29" width="4" height="2" fill="#1e8fe0"/><rect x="467" y="28" width="2" height="4" fill="#1e8fe0"/>
<rect x="472" y="29" width="4" height="2" fill="#1e8fe0"/><rect x="473" y="28" width="2" height="4" fill="#1e8fe0"/>
<rect x="484" y="29" width="4" height="2" fill="#1e8fe0"/><rect x="485" y="28" width="2" height="4" fill="#1e8fe0"/>
<rect x="496" y="29" width="4" height="2" fill="#1e8fe0"/><rect x="497" y="28" width="2" height="4" fill="#1e8fe0"/>
<rect x="508" y="29" width="4" height="2" fill="#1e8fe0"/><rect x="509" y="28" width="2" height="4" fill="#1e8fe0"/>
<rect x="514" y="29" width="4" height="2" fill="#1e8fe0"/><rect x="515" y="28" width="2" height="4" fill="#1e8fe0"/>
<rect x="520" y="29" width="4" height="2" fill="#1e8fe0"/><rect x="521" y="28" width="2" height="4" fill="#1e8fe0"/>
<rect x="526" y="29" width="4" height="2" fill="#1e8fe0"/><rect x="527" y="28" width="2" height="4" fill="#1e8fe0"/>
<rect x="538" y="29" width="4" height="2" fill="#1e8fe0"/><rect x="539" y="28" width="2" height="4" fill="#1e8fe0"/>
<rect x="544" y="29" width="4" height="2" fill="#1e8fe0"/><rect x="545" y="28" width="2" height="4" fill="#1e8fe0"/>
<rect x="604" y="29" width="4" height="2" fill="#1e8fe0"/><rect x="605" y="28" width="2" height="4" fill="#1e8fe0"/>
<rect x="616" y="29" width="4" height="2" fill="#1e8fe0"/><rect x="617" y="28" width="2" height="4" fill="#1e8fe0"/>
<rect x="640" y="29" width="4" height="2" fill="#1e8fe0"/><rect x="641" y="28" width="2" height="4" fill="#1e8fe0"/>
<rect x="670" y="29" width="4" height="2" fill="#1e8fe0"/><rect x="671" y="28" width="2" height="4" fill="#1e8fe0"/>
<rect x="682" y="29" width="4" height="2" fill="#1e8fe0"/><rect x="683" y="28" width="2" height="4" fill="#1e8fe0"/>
<rect x="694" y="29" width="4" height="2" fill="#1e8fe0"/><rect x="695" y="28" width="2" height="4" fill="#1e8fe0"/>
<rect x="706" y="29" width="4" height="2" fill="#1e8fe0"/><rect x="707" y="28" width="2" height="4" fill="#1e8fe0"/>
<rect x="718" y="29" width="4" height="2" fill="#1e8fe0"/><rect x="719" y="28" width="2" height="4" fill="#1e8fe0"/>
<rect x="790" y="29" width="4" height="2" fill="#1e8fe0"/><rect x="791" y="28" width="2" height="4" fill="#1e8fe0"/>
<rect x="808" y="29" width="4" height="2" fill="#1e8fe0"/><rect x="809" y="28" width="2" height="4" fill="#1e8fe0"/>
<rect x="814" y="29" width="4" height="2" fill="#1e8fe0"/><rect x="815" y="28" width="2" height="4" fill="#1e8fe0"/>
<rect x="826" y="29" width="4" height="2" fill="#1e8fe0"/><rect x="827" y="28" width="2" height="4" fill="#1e8fe0"/>
<rect x="838" y="29" width="4" height="2" fill="#1e8fe0"/><rect x="839" y="28" width="2" height="4" fill="#1e8fe0"/>
<rect x="844" y="29" width="4" height="2" fill="#1e8fe0"/><rect x="845" y="28" width="2" height="4" fill="#1e8fe0"/>
<rect x="868" y="29" width="4" height="2" fill="#1e8fe0"/><rect x="869" y="28" width="2" height="4" fill="#1e8fe0"/>
<rect x="94" y="461" width="1" height="14" fill="#ff3355"/>
<rect x="100" y="460" width="1" height="15" fill="#ff3355"/>
<rect x="106" y="463" width="1" height="12" fill="#ff3355"/>
<rect x="112" y="470" width="1" height="5" fill="#ff3355"/>
<rect x="118" y="474" width="1" height="1" fill="#ff3355"/>
<rect x="124" y="474" width="1" height="1" fill="#3fc884"/>
<rect x="130" y="470" width="1" height="5" fill="#ff3355"/>
<rect x="136" y="474" width="1" height="4" fill="#3fc884"/>
<rect x="142" y="474" width="1" height="11" fill="#3fc884"/>
<rect x="148" y="474" width="1" height="13" fill="#3fc884"/>
<rect x="154" y="474" width="1" height="17" fill="#3fc884"/>
<rect x="160" y="474" width="1" height="17" fill="#3fc884"/>
<rect x="166" y="474" width="1" height="24" fill="#3fc884"/>
<rect x="172" y="474" width="1" height="25" fill="#3fc884"/>
<rect x="178" y="474" width="1" height="24" fill="#3fc884"/>
<rect x="184" y="474" width="1" height="24" fill="#3fc884"/>
<rect x="190" y="474" width="1" height="23" fill="#3fc884"/>
<rect x="196" y="474" width="1" height="22" fill="#3fc884"/>
<rect x="202" y="474" width="1" height="24" fill="#3fc884"/>
<rect x="208" y="474" width="1" height="15" fill="#3fc884"/>
<rect x="214" y="474" width="1" height="4" fill="#3fc884"/>
<rect x="220" y="470" width="1" height="5" fill="#ff3355"/>
<rect x="226" y="472" width="1" height="3" fill="#ff3355"/>
<rect x="232" y="474" width="1" height="1" fill="#3fc884"/>
<rect x="238" y="472" width="1" height="3" fill="#ff3355"/>
<rect x="244" y="473" width="1" height="2" fill="#ff3355"/>
<rect x="250" y="474" width="1" height="3" fill="#3fc884"/>
<rect x="256" y="474" width="1" height="7" fill="#3fc884"/>
<rect x="262" y="474" width="1" height="9" fill="#3fc884"/>
<rect x="268" y="474" width="1" height="16" fill="#3fc884"/>
<rect x="274" y="474" width="1" height="21" fill="#3fc884"/>
<rect x="280" y="474" width="1" height="30" fill="#3fc884"/>
<rect x="286" y="474" width="1" height="30" fill="#3fc884"/>
<rect x="292" y="474" width="1" height="30" fill="#3fc884"/>
<rect x="298" y="474" width="1" height="26" fill="#3fc884"/>
<rect x="304" y="474" width="1" height="27" fill="#3fc884"/>
<rect x="310" y="474" width="1" height="31" fill="#3fc884"/>
<rect x="316" y="474" width="1" height="30" fill="#3fc884"/>
<rect x="322" y="474" width="1" height="29" fill="#3fc884"/>
<rect x="328" y="474" width="1" height="22" fill="#3fc884"/>
<rect x="334" y="474" width="1" height="16" fill="#3fc884"/>
<rect x="340" y="474" width="1" height="9" fill="#3fc884"/>
<rect x="346" y="474" width="1" height="9" fill="#3fc884"/>
<rect x="352" y="474" width="1" height="6" fill="#3fc884"/>
<rect x="358" y="474" width="1" height="4" fill="#3fc884"/>
<rect x="364" y="474" width="1" height="7" fill="#3fc884"/>
<rect x="370" y="474" width="1" height="2" fill="#3fc884"/>
<rect x="376" y="473" width="1" height="2" fill="#ff3355"/>
<rect x="382" y="472" width="1" height="3" fill="#ff3355"/>
<rect x="388" y="474" width="1" height="2" fill="#3fc884"/>
<rect x="394" y="474" width="1" height="3" fill="#3fc884"/>
<rect x="400" y="473" width="1" height="2" fill="#ff3355"/>
<rect x="406" y="471" width="1" height="4" fill="#ff3355"/>
<rect x="412" y="471" width="1" height="4" fill="#ff3355"/>
<rect x="418" y="474" width="1" height="2" fill="#3fc884"/>
<rect x="424" y="474" width="1" height="4" fill="#3fc884"/>
<rect x="430" y="474" width="1" height="9" fill="#3fc884"/>
<rect x="436" y="474" width="1" height="9" fill="#3fc884"/>
<rect x="442" y="474" width="1" height="9" fill="#3fc884"/>
<rect x="448" y="474" width="1" height="11" fill="#3fc884"/>
<rect x="454" y="474" width="1" height="11" fill="#3fc884"/>
<rect x="460" y="474" width="1" height="10" fill="#3fc884"/>
<rect x="466" y="474" width="1" height="8" fill="#3fc884"/>
<rect x="472" y="474" width="1" height="4" fill="#3fc884"/>
<rect x="478" y="473" width="1" height="2" fill="#ff3355"/>
<rect x="484" y="473" width="1" height="2" fill="#ff3355"/>
<rect x="490" y="473" width="1" height="2" fill="#ff3355"/>
<rect x="496" y="470" width="1" height="5" fill="#ff3355"/>
<rect x="502" y="467" width="1" height="8" fill="#ff3355"/>
<rect x="508" y="464" width="1" height="11" fill="#ff3355"/>
<rect x="514" y="457" width="1" height="18" fill="#ff3355"/>
<rect x="520" y="452" width="1" height="23" fill="#ff3355"/>
<rect x="526" y="451" width="1" height="24" fill="#ff3355"/>
<rect x="532" y="451" width="1" height="24" fill="#ff3355"/>
<rect x="538" y="447" width="1" height="28" fill="#ff3355"/>
<rect x="544" y="446" width="1" height="29" fill="#ff3355"/>
<rect x="550" y="449" width="1" height="26" fill="#ff3355"/>
<rect x="556" y="454" width="1" height="21" fill="#ff3355"/>
<rect x="562" y="459" width="1" height="16" fill="#ff3355"/>
<rect x="568" y="461" width="1" height="14" fill="#ff3355"/>
<rect x="574" y="462" width="1" height="13" fill="#ff3355"/>
<rect x="580" y="469" width="1" height="6" fill="#ff3355"/>
<rect x="586" y="470" width="1" height="5" fill="#ff3355"/>
<rect x="592" y="471" width="1" height="4" fill="#ff3355"/>
<rect x="598" y="474" width="1" height="3" fill="#3fc884"/>
<rect x="604" y="474" width="1" height="8" fill="#3fc884"/>
<rect x="610" y="474" width="1" height="10" fill="#3fc884"/>
<rect x="616" y="474" width="1" height="10" fill="#3fc884"/>
<rect x="622" y="474" width="1" height="12" fill="#3fc884"/>
<rect x="628" y="474" width="1" height="14" fill="#3fc884"/>
<rect x="634" y="474" width="1" height="17" fill="#3fc884"/>
<rect x="640" y="474" width="1" height="18" fill="#3fc884"/>
<rect x="646" y="474" width="1" height="19" fill="#3fc884"/>
<rect x="652" y="474" width="1" height="18" fill="#3fc884"/>
<rect x="658" y="474" width="1" height="19" fill="#3fc884"/>
<rect x="664" y="474" width="1" height="20" fill="#3fc884"/>
<rect x="670" y="474" width="1" height="20" fill="#3fc884"/>
<rect x="676" y="474" width="1" height="19" fill="#3fc884"/>
<rect x="682" y="474" width="1" height="17" fill="#3fc884"/>
<rect x="688" y="474" width="1" height="13" fill="#3fc884"/>
<rect x="694" y="474" width="1" height="5" fill="#3fc884"/>
<rect x="700" y="473" width="1" height="2" fill="#ff3355"/>
<rect x="706" y="470" width="1" height="5" fill="#ff3355"/>
<rect x="712" y="466" width="1" height="9" fill="#ff3355"/>
<rect x="718" y="460" width="1" height="15" fill="#ff3355"/>
<rect x="724" y="456" width="1" height="19" fill="#ff3355"/>
<rect x="730" y="454" width="1" height="21" fill="#ff3355"/>
<rect x="736" y="454" width="1" height="21" fill="#ff3355"/>
<rect x="742" y="455" width="1" height="20" fill="#ff3355"/>
<rect x="748" y="459" width="1" height="16" fill="#ff3355"/>
<rect x="754" y="465" width="1" height="10" fill="#ff3355"/>
<rect x="760" y="468" width="1" height="7" fill="#ff3355"/>
<rect x="766" y="471" width="1" height="4" fill="#ff3355"/>
<rect x="772" y="471" width="1" height="4" fill="#ff3355"/>
<rect x="778" y="474" width="1" height="1" fill="#ff3355"/>
<rect x="784" y="474" width="1" height="3" fill="#3fc884"/>
<rect x="790" y="474" width="1" height="4" fill="#3fc884"/>
<rect x="796" y="474" width="1" height="2" fill="#3fc884"/>
<rect x="802" y="471" width="1" height="4" fill="#ff3355"/>
<rect x="808" y="469" width="1" height="6" fill="#ff3355"/>
<rect x="814" y="469" width="1" height="6" fill="#ff3355"/>
<rect x="820" y="471" width="1" height="4" fill="#ff3355"/>
<rect x="826" y="471" width="1" height="4" fill="#ff3355"/>
<rect x="832" y="473" width="1" height="2" fill="#ff3355"/>
<rect x="838" y="474" width="1" height="4" fill="#3fc884"/>
<rect x="844" y="474" width="1" height="14" fill="#3fc884"/>
<rect x="850" y="474" width="1" height="21" fill="#3fc884"/>
<rect x="856" y="474" width="1" height="27" fill="#3fc884"/>
<rect x="862" y="474" width="1" height="34" fill="#3fc884"/>
<rect x="868" y="474" width="1" height="38" fill="#3fc884"/>
<rect x="874" y="474" width="1" height="39" fill="#3fc884"/>
<rect x="880" y="474" width="1" height="37" fill="#3fc884"/>
<rect x="886" y="474" width="1" height="31" fill="#3fc884"/>
<rect x="892" y="474" width="1" height="18" fill="#3fc884"/>
<rect x="898" y="474" width="1" height="8" fill="#3fc884"/>
<polyline points="94.5,422.5 100.5,420.6 106.5,419.2 112.5,418.6 118.5,418.5 124.5,418.5 130.5,417.9 136.5,418.4 142.5,419.7 148.5,421.2 154.5,423.2 160.5,425.3 166.5,428.2 172.5,431.3 178.5,434.2 184.5,437.2 190.5,440.0 196.5,442.8 202.5,445.7 208.5,447.6 214.5,448.1 220.5,447.5 226.5,447.2 232.5,447.2 238.5,446.9 244.5,446.7 250.5,447.1 256.5,448.0 262.5,449.1 268.5,451.1 274.5,453.7 280.5,457.4 286.5,461.1 292.5,464.9 298.5,468.1 304.5,471.5 310.5,475.4 316.5,479.1 322.5,482.6 328.5,485.4 334.5,487.4 340.5,488.4 346.5,489.5 352.5,490.3 358.5,490.7 364.5,491.5 370.5,491.6 376.5,491.5 382.5,491.2 388.5,491.4 394.5,491.7 400.5,491.6 406.5,491.1 412.5,490.6 418.5,490.8 424.5,491.2 430.5,492.3 436.5,493.4 442.5,494.5 448.5,495.8 454.5,497.1 460.5,498.3 466.5,499.3 472.5,499.7 478.5,499.5 484.5,499.4 490.5,499.3 496.5,498.7 502.5,497.8 508.5,496.6 514.5,494.4 520.5,491.6 526.5,488.7 532.5,485.8 538.5,482.4 544.5,478.9 550.5,475.7 556.5,473.2 562.5,471.3 568.5,469.6 574.5,468.1 580.5,467.5 586.5,467.0 592.5,466.6 598.5,466.8 604.5,467.8 610.5,469.1 616.5,470.3 622.5,471.7 628.5,473.4 634.5,475.5 640.5,477.8 646.5,480.1 652.5,482.4 658.5,484.8 664.5,487.3 670.5,489.7 676.5,492.1 682.5,494.2 688.5,495.8 694.5,496.3 700.5,496.2 706.5,495.6 712.5,494.5 718.5,492.7 724.5,490.4 730.5,487.8 736.5,485.2 742.5,482.8 748.5,480.9 754.5,479.7 760.5,478.8 766.5,478.4 772.5,477.9 778.5,477.8 784.5,478.2 790.5,478.7 796.5,478.9 802.5,478.4 808.5,477.7 814.5,477.0 820.5,476.5 826.5,476.1 832.5,475.9 838.5,476.4 844.5,478.0 850.5,480.5 856.5,483.9 862.5,488.1 868.5,492.8 874.5,497.6 880.5,502.2 886.5,505.9 892.5,508.1 898.5,509.0" fill="none" stroke="#e0dc28" stroke-width="1" stroke-linejoin="round"/>
<polyline points="94.5,415.6 100.5,413.3 106.5,413.4 112.5,416.4 118.5,418.3 124.5,418.5 130.5,415.8 136.5,420.2 142.5,424.9 148.5,427.4 154.5,431.5 160.5,433.5 166.5,440.1 172.5,443.5 178.5,446.1 184.5,449.0 190.5,451.6 196.5,453.8 202.5,457.6 208.5,455.1 214.5,450.1 220.5,445.5 226.5,446.0 232.5,447.2 238.5,445.7 244.5,446.2 250.5,448.6 256.5,451.5 262.5,453.6 268.5,459.1 274.5,464.2 280.5,472.5 286.5,476.1 292.5,479.9 298.5,481.2 304.5,485.0 310.5,490.9 316.5,494.2 322.5,496.9 328.5,496.4 334.5,495.4 340.5,492.6 346.5,494.0 352.5,493.3 358.5,492.5 364.5,494.7 370.5,492.4 376.5,491.0 382.5,490.0 388.5,492.4 394.5,492.9 400.5,491.1 406.5,489.3 412.5,488.8 418.5,491.6 424.5,493.0 430.5,496.5 436.5,497.9 442.5,499.0 448.5,501.0 454.5,502.6 460.5,503.3 466.5,503.1 472.5,501.4 478.5,499.0 484.5,498.9 490.5,498.8 496.5,496.7 502.5,494.3 508.5,491.6 514.5,485.9 520.5,480.6 526.5,477.2 532.5,474.3 538.5,468.9 544.5,464.8 550.5,463.2 556.5,463.2 562.5,463.8 568.5,463.1 574.5,462.1 580.5,465.0 586.5,465.0 592.5,465.1 598.5,468.0 604.5,471.8 610.5,474.1 616.5,475.3 622.5,477.6 628.5,480.3 634.5,484.1 640.5,486.8 646.5,489.7 652.5,491.4 658.5,494.3 664.5,497.3 670.5,499.8 676.5,501.7 682.5,502.8 688.5,502.0 694.5,498.5 700.5,495.7 706.5,493.4 712.5,490.3 718.5,485.4 724.5,481.1 730.5,477.5 736.5,474.9 742.5,473.2 748.5,473.3 754.5,474.9 760.5,475.6 766.5,476.6 772.5,476.1 778.5,477.6 784.5,479.7 790.5,480.7 796.5,479.7 802.5,476.6 808.5,474.9 814.5,474.2 820.5,474.9 826.5,474.4 832.5,475.3 838.5,478.4 844.5,484.6 850.5,490.7 856.5,497.3 862.5,505.2 868.5,511.7 874.5,516.8 880.5,520.4 886.5,521.1 892.5,516.8 898.5,512.7" fill="none" stroke="#e8e8e8" stroke-width="1" stroke-linejoin="round"/>
<polyline points="94.5,577.2 100.5,573.6 106.5,573.2 112.5,574.8 118.5,575.6 124.5,575.2 130.5,573.2 136.5,574.2 142.5,578.4 148.5,582.8 154.5,586.7 160.5,589.3 166.5,593.2 172.5,596.4 178.5,598.4 184.5,600.2 190.5,600.7 196.5,599.9 202.5,600.1 208.5,595.5 214.5,589.0 220.5,584.5 226.5,583.7 232.5,584.4 238.5,584.7 244.5,585.1 250.5,586.7 256.5,589.1 262.5,592.5 268.5,597.3 274.5,601.8 280.5,605.8 286.5,607.6 292.5,608.7 298.5,608.9 304.5,610.1 310.5,612.0 316.5,613.3 322.5,614.2 328.5,611.8 334.5,607.7 340.5,601.2 346.5,598.5 352.5,595.9 358.5,593.2 364.5,594.2 370.5,593.0 376.5,591.6 382.5,591.6 388.5,594.4 394.5,598.0 400.5,597.0 406.5,594.4 412.5,592.4 418.5,593.2 424.5,595.2 430.5,599.2 436.5,602.4 442.5,604.5 448.5,607.1 454.5,609.7 460.5,610.7 466.5,609.5 472.5,606.0 478.5,600.8 484.5,597.2 490.5,595.4 496.5,592.1 502.5,588.3 508.5,584.1 514.5,579.3 520.5,574.8 526.5,571.7 532.5,569.8 538.5,567.8 544.5,566.1 550.5,566.1 556.5,567.9 562.5,571.8 568.5,576.1 574.5,578.8 580.5,584.7 586.5,589.0 592.5,591.3 598.5,595.6 604.5,600.5 610.5,604.6 616.5,606.3 622.5,607.5 628.5,609.7 634.5,612.2 640.5,614.6 646.5,616.4 652.5,617.5 658.5,617.8 664.5,618.5 670.5,619.0 676.5,619.1 682.5,618.3 688.5,616.6 694.5,610.2 700.5,602.5 706.5,595.8 712.5,589.4 718.5,582.8 724.5,577.6 730.5,574.0 736.5,571.8 742.5,570.8 748.5,572.8 754.5,577.4 760.5,583.8 766.5,589.1 772.5,594.4 778.5,599.0 784.5,603.5 790.5,606.2 796.5,605.0 802.5,599.2 808.5,593.0 814.5,589.0 820.5,588.1 826.5,587.8 832.5,589.2 838.5,593.5 844.5,598.5 850.5,603.0 856.5,607.2 862.5,610.8 868.5,613.4 874.5,615.2 880.5,616.6 886.5,616.6 892.5,613.4 898.5,607.2" fill="none" stroke="#e0dc28" stroke-width="1" stroke-linejoin="round"/>
<polyline points="94.5,573.2 100.5,570.1 106.5,571.5 112.5,576.8 118.5,577.2 124.5,574.2 130.5,570.7 136.5,577.2 142.5,586.8 148.5,591.5 154.5,594.6 160.5,594.4 166.5,601.0 172.5,602.9 178.5,602.2 184.5,603.9 190.5,601.7 196.5,598.2 202.5,600.5 208.5,586.3 214.5,576.1 220.5,575.4 226.5,582.2 232.5,585.7 238.5,585.3 244.5,585.9 250.5,590.0 256.5,593.7 262.5,599.4 268.5,606.8 274.5,610.8 280.5,613.8 286.5,611.3 292.5,610.8 298.5,609.2 304.5,612.6 310.5,615.7 316.5,616.0 322.5,615.9 328.5,607.0 334.5,599.7 340.5,588.2 346.5,593.0 352.5,590.6 358.5,587.9 364.5,596.2 370.5,590.6 376.5,588.9 382.5,591.4 388.5,600.2 394.5,605.0 400.5,595.2 406.5,589.1 412.5,588.5 418.5,594.9 424.5,599.0 430.5,607.1 436.5,608.8 442.5,608.6 448.5,612.5 454.5,614.9 460.5,612.5 466.5,607.0 472.5,599.1 478.5,590.6 484.5,590.0 490.5,591.7 496.5,585.4 502.5,580.8 508.5,575.6 514.5,569.7 520.5,565.7 526.5,565.5 532.5,566.0 538.5,563.8 544.5,562.7 550.5,566.0 556.5,571.5 562.5,579.8 568.5,584.7 574.5,584.2 580.5,596.3 586.5,597.6 592.5,595.8 598.5,604.2 604.5,610.2 610.5,612.9 616.5,609.6 622.5,610.0 628.5,614.1 634.5,617.2 640.5,619.2 646.5,620.1 652.5,619.8 658.5,618.4 664.5,620.0 670.5,619.9 676.5,619.3 682.5,616.7 688.5,613.1 694.5,597.4 700.5,587.2 706.5,582.4 712.5,576.5 718.5,569.6 724.5,567.4 730.5,566.6 736.5,567.5 742.5,568.7 748.5,576.8 754.5,586.7 760.5,596.4 766.5,599.9 772.5,604.8 778.5,608.3 784.5,612.4 790.5,611.8 796.5,602.5 802.5,587.5 808.5,580.6 814.5,581.1 820.5,586.4 826.5,587.1 832.5,592.0 838.5,602.0 844.5,608.6 850.5,612.0 856.5,615.5 862.5,618.1 868.5,618.5 874.5,619.0 880.5,619.3 886.5,616.7 892.5,606.8 898.5,594.9" fill="none" stroke="#e8e8e8" stroke-width="1" stroke-linejoin="round"/>
<polyline points="94.5,565.2 100.5,563.1 106.5,568.1 112.5,580.8 118.5,580.4 124.5,572.2 130.5,565.7 136.5,583.2 142.5,603.7 148.5,608.9 154.5,610.4 160.5,604.7 166.5,616.6 172.5,615.8 178.5,610.0 184.5,611.2 190.5,603.6 196.5,594.9 202.5,601.4 208.5,568.0 214.5,550.2 220.5,557.2 226.5,579.1 232.5,588.4 238.5,586.5 244.5,587.5 250.5,596.5 256.5,603.0 262.5,613.3 268.5,625.9 274.5,628.7 280.5,629.8 286.5,618.7 292.5,614.9 298.5,610.0 304.5,617.6 310.5,623.2 316.5,621.4 322.5,619.3 328.5,597.4 334.5,583.6 340.5,562.1 346.5,582.0 352.5,580.2 358.5,577.3 364.5,600.1 370.5,585.7 376.5,583.5 382.5,591.1 388.5,611.8 394.5,619.0 400.5,591.5 406.5,578.5 412.5,580.6 418.5,598.2 424.5,606.7 430.5,623.0 436.5,621.7 442.5,617.0 448.5,623.3 454.5,625.3 460.5,616.2 466.5,602.2 472.5,585.2 478.5,570.0 484.5,575.5 490.5,584.3 496.5,572.2 502.5,565.8 508.5,558.6 514.5,550.4 520.5,547.7 526.5,553.3 532.5,558.5 538.5,555.7 544.5,556.0 550.5,565.8 556.5,578.9 562.5,595.6 568.5,601.9 574.5,595.0 580.5,619.6 586.5,614.8 592.5,605.0 598.5,621.5 604.5,629.7 610.5,629.4 616.5,616.4 622.5,615.0 628.5,623.0 634.5,627.1 640.5,628.6 646.5,627.6 652.5,624.2 658.5,619.5 664.5,622.9 670.5,621.7 676.5,619.7 682.5,613.5 688.5,606.2 694.5,572.0 700.5,556.6 706.5,555.4 712.5,550.7 718.5,543.1 724.5,546.9 730.5,551.9 736.5,558.9 742.5,564.5 748.5,584.9 754.5,605.2 760.5,621.8 766.5,621.4 772.5,625.7 778.5,626.9 784.5,630.2 790.5,622.9 796.5,597.5 802.5,564.2 808.5,555.8 814.5,565.2 820.5,582.9 826.5,585.8 832.5,597.6 838.5,619.2 844.5,628.9 850.5,630.0 856.5,632.0 862.5,632.0 868.5,628.7 874.5,626.4 880.5,624.8 886.5,616.8 892.5,593.8 898.5,570.2" fill="none" stroke="#e040e0" stroke-width="1" stroke-linejoin="round"/>
<text x="91.5" y="14.0" fill="#ffffff" font-size="12" font-family='"Liberation Sans", sans-serif' >现货黄金</text>
<text x="139.5" y="14.0" fill="#f0a030" font-size="12" font-family='"Liberation Sans", sans-serif' >【日线】</text>
<rect x="196" y="2" width="12" height="12" fill="#9a9a9a"/>
<rect x="195" y="1" width="12" height="12" fill="#000090"/>
<rect x="196" y="2" width="10" height="10" fill="#ffffff"/>
<polyline points="196,8 199.5,3.5 202.5,6.5 206,4" fill="none" stroke="#ff1010" stroke-width="1" style="shape-rendering:geometricPrecision"/>
<polyline points="196,11 199.5,6.5 202.5,9.5 206,7" fill="none" stroke="#1010ff" stroke-width="1" style="shape-rendering:geometricPrecision"/>
<text x="208.7" y="14.3" fill="#ffffff" font-size="12.7" font-family='"Liberation Sans", sans-serif' >MA(5,10,21,55,100,200)</text>
<text x="347.8" y="14.3" fill="#ffffff" font-size="12.64" font-family='"Liberation Sans", sans-serif' >MA5:1839.55</text>
<text x="430.7" y="14.3" fill="#e0dc28" font-size="12.5" font-family='"Liberation Sans", sans-serif' >MA10:1843.67</text>
<text x="520.3" y="14.3" fill="#e040e0" font-size="12.6" font-family='"Liberation Sans", sans-serif' >MA21:1883.21</text>
<text x="610.7" y="14.3" fill="#30cc30" font-size="12.7" font-family='"Liberation Sans", sans-serif' >MA55:1908.78</text>
<text x="700.8" y="14.3" fill="#909090" font-size="12.9" font-family='"Liberation Sans", sans-serif' >MA100</text>
<rect x="785.5" y="0.5" width="74" height="15" fill="#080808" stroke="#6a6a6a"/>
<text x="792.0" y="12.6" fill="#b8b8b8" font-size="12" font-family='"Liberation Sans", sans-serif' >全部主题</text>
<path d="M842 5.5 h8.5 l-4.25 7.5 z" fill="#909090" shape-rendering="geometricPrecision"/>
<rect x="863.5" y="1.5" width="13" height="13" fill="none" stroke="#a8a8a8"/>
<rect x="879.5" y="1.5" width="13" height="13" fill="none" stroke="#a8a8a8"/>
<rect x="895.5" y="1.5" width="13" height="13" fill="none" stroke="#a8a8a8"/>
<rect x="911.5" y="1.5" width="13" height="13" fill="none" stroke="#a8a8a8"/>
<rect x="869" y="3" width="2" height="2" fill="#b0b0b0"/>
<rect x="869" y="11" width="2" height="2" fill="#b0b0b0"/>
<rect x="865" y="7" width="2" height="2" fill="#b0b0b0"/>
<rect x="873" y="7" width="2" height="2" fill="#b0b0b0"/>
<rect x="869" y="7" width="2" height="2" fill="#b0b0b0"/>
<path d="M882.5 4 v8.5 h9 M881 5.5 l1.5 -1.5 l1.5 1.5 M889 11 l1.5 1.5 l-1.5 1.5" stroke="#b0b0b0" fill="none"/>
<path d="M898.5 4 v8.5 h9 M897 5.5 l1.5 -1.5 l1.5 1.5 M905 11 l1.5 1.5 l-1.5 1.5" stroke="#b0b0b0" fill="none"/>
<path d="M886.5 4.5 v5 M891 4.5 l-3.5 2.5 l3.5 2.5 z" stroke="#b0b0b0" fill="#b0b0b0"/>
<path d="M901 4.5 l5 3.5 l-5 3.5 z" stroke="#b0b0b0" fill="#b0b0b0"/>
<rect x="914.5" y="4.5" width="2" height="9" fill="none" stroke="#b0b0b0"/>
<path d="M917 8.5 h5 M920 6.5 l2 2 l-2 2" stroke="#b0b0b0" fill="none"/>
<text x="91.0" y="405.3" fill="#e8e8e8" font-size="12.64" font-family='"Liberation Sans", sans-serif' >MACD(26,12,9)</text>
<text x="181.0" y="405.3" fill="#e8e8e8" font-size="12.3" font-family='"Liberation Sans", sans-serif' >DIFF:-21.55</text>
<text x="253.3" y="405.3" fill="#e0dc28" font-size="12.42" font-family='"Liberation Sans", sans-serif' >DEA:-19.50</text>
<text x="325.0" y="405.3" fill="#e040e0" font-size="12.64" font-family='"Liberation Sans", sans-serif' >MACD:-4.10</text>
<text x="91.7" y="535.0" fill="#e8e8e8" font-size="12.2" font-family='"Liberation Sans", sans-serif' >KDJ(9,3,3)</text>
<text x="152.7" y="535.0" fill="#e8e8e8" font-size="12.3" font-family='"Liberation Sans", sans-serif' >K:42.83</text>
<text x="202.8" y="535.0" fill="#e0dc28" font-size="12.39" font-family='"Liberation Sans", sans-serif' >D:24.80</text>
<text x="254.2" y="535.0" fill="#e040e0" font-size="12.0" font-family='"Liberation Sans", sans-serif' >J:78.89</text>
<rect x="27" y="525" width="4" height="6" fill="#ffffff"/>
<rect x="26" y="526" width="6" height="4" fill="#ffffff"/>
<rect x="28" y="526" width="2" height="4" fill="#ff0000"/>
<rect x="27" y="527" width="4" height="2" fill="#ff0000"/>
<rect x="28" y="521" width="1" height="2" fill="#ff0000"/>
<rect x="28" y="533" width="1" height="2" fill="#ff0000"/>
<rect x="22" y="527" width="2" height="1" fill="#ff0000"/>
<rect x="34" y="527" width="2" height="1" fill="#ff0000"/>
<rect x="23" y="522" width="1" height="1" fill="#ff0000"/>
<rect x="24" y="523" width="1" height="1" fill="#ff0000"/>
<rect x="34" y="522" width="1" height="1" fill="#ff0000"/>
<rect x="33" y="523" width="1" height="1" fill="#ff0000"/>
<rect x="23" y="533" width="1" height="1" fill="#ff0000"/>
<rect x="24" y="532" width="1" height="1" fill="#ff0000"/>
<rect x="33" y="532" width="1" height="1" fill="#ff0000"/>
<rect x="34" y="533" width="1" height="1" fill="#ff0000"/>
<text x="204.0" y="646.0" fill="#b4bccc" font-size="12.5" font-family='"Liberation Sans", sans-serif' font-weight="bold">2023/05</text>
<text x="342.0" y="646.0" fill="#b4bccc" font-size="12.5" font-family='"Liberation Sans", sans-serif' font-weight="bold">2023/06</text>
<text x="474.0" y="646.0" fill="#b4bccc" font-size="12.5" font-family='"Liberation Sans", sans-serif' font-weight="bold">2023/07</text>
<text x="600.5" y="646.0" fill="#b4bccc" font-size="12.5" font-family='"Liberation Sans", sans-serif' font-weight="bold">2023/08</text>
<text x="738.0" y="646.0" fill="#b4bccc" font-size="12.5" font-family='"Liberation Sans", sans-serif' font-weight="bold">2023/09</text>
<text x="864.5" y="646.0" fill="#b4bccc" font-size="12.5" font-family='"Liberation Sans", sans-serif' font-weight="bold">2023/10</text>
<text x="34.0" y="648.0" fill="#ffc860" font-size="13" font-family='"Liberation Sans", sans-serif' font-weight="bold">日线</text>
<path d="M65 648 l4 -8 l4 8 z" fill="#ffc860" shape-rendering="geometricPrecision"/>
<rect x="90" y="633" width="1" height="20" fill="#292929"/>
<rect x="720" y="650" width="207" height="1" fill="#3a3a3a"/>
<rect x="0" y="653" width="996" height="1" fill="#292929"/>
<rect x="60" y="654" width="39" height="15" fill="#3c3f48"/>
<rect x="278" y="654" width="63" height="15" fill="#3c3f48"/>
<rect x="20" y="654" width="1" height="15" fill="#262626"/>
<rect x="60" y="654" width="1" height="15" fill="#262626"/>
<rect x="99" y="654" width="1" height="15" fill="#262626"/>
<rect x="157" y="654" width="1" height="15" fill="#262626"/>
<rect x="198" y="654" width="1" height="15" fill="#262626"/>
<rect x="237" y="654" width="1" height="15" fill="#262626"/>
<rect x="278" y="654" width="1" height="15" fill="#262626"/>
<rect x="341" y="654" width="1" height="15" fill="#262626"/>
<rect x="405" y="654" width="1" height="15" fill="#262626"/>
<text x="39.3" y="666" fill="#c0c0c0" font-size="12" text-anchor="middle" font-family='"Liberation Sans", sans-serif'>指标</text>
<text x="79.8" y="666" fill="#e0e0e0" font-size="12" text-anchor="middle" font-family='"Liberation Sans", sans-serif'>模板</text>
<text x="107.5" y="666.5" fill="#ffc860" font-size="12.5" textLength="18" lengthAdjust="spacingAndGlyphs" font-family='"Liberation Mono", monospace'>VIP</text>
<text x="125.7" y="666" fill="#ffc860" font-size="12" font-family='"Liberation Sans", sans-serif'>指标</text>
<text x="177.2" y="666" fill="#c0c0c0" font-size="12" text-anchor="middle" font-family='"Liberation Sans", sans-serif'>标准</text>
<text x="217.4" y="666" fill="#c0c0c0" font-size="10.5" text-anchor="middle" font-family='"Liberation Mono", monospace'>MACD</text>
<text x="257.5" y="666" fill="#c0c0c0" font-size="10.5" text-anchor="middle" font-family='"Liberation Mono", monospace'>BOLL</text>
<text x="310.4" y="666" fill="#e8e8e8" font-size="12" text-anchor="middle" font-family='"Liberation Sans", sans-serif'>另存模板</text>
<text x="373.5" y="666" fill="#c8c8c8" font-size="12" text-anchor="middle" font-family='"Liberation Sans", sans-serif'>管理模板</text>
<rect x="405.5" y="653.5" width="589" height="20" fill="none" stroke="#262626"/>
<rect x="994" y="328" width="1" height="68" fill="#262626"/>
<rect x="994" y="419" width="1" height="110" fill="#262626"/>
<rect x="994" y="541" width="1" height="36" fill="#262626"/></svg>
</body></html>
